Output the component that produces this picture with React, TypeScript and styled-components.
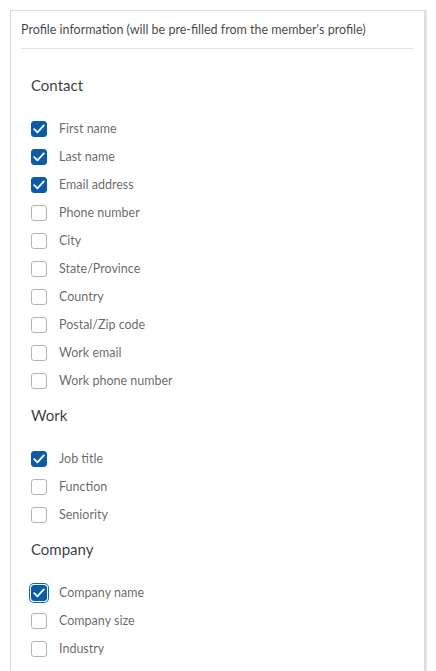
import React, { useState } from 'react';
import styled, { createGlobalStyle } from 'styled-components';

const GlobalStyle = createGlobalStyle`
  html, body {
    margin: 0;
    padding: 0;
    background: #ffffff;
    font-family: Lato, "Noto Sans", sans-serif;
  }
`;

const Panel = styled.div`
  box-sizing: border-box;
  margin: 10px 0 0 10px;
  width: 415px;
  border: 1px solid #dcdcdc;
  box-shadow: 2px 0 0 #e4e4e4;
  padding: 0 11px 20px 10px;
  background: #fff;
`;

const Header = styled.div`
  height: 37px;
  display: flex;
  align-items: center;
  border-bottom: 1px solid #e2e2e2;
  font-size: 12.5px;
  color: rgba(0, 0, 0, 0.75);
`;

const Sections = styled.div`
  padding: 26px 0 0 10px;
  display: flex;
  flex-direction: column;
  gap: 10.5px;
`;

const SectionTitle = styled.div`
  font-size: 15px;
  line-height: 20px;
  color: rgba(0, 0, 0, 0.78);
  margin-bottom: 19.5px;
`;

const Row = styled.label`
  display: flex;
  align-items: center;
  height: 28px;
  cursor: pointer;
`;

const Box = styled.span<{ $checked: boolean; $focused?: boolean }>`
  box-sizing: border-box;
  width: 16px;
  height: 16px;
  border-radius: 3px;
  flex: none;
  display: flex;
  align-items: center;
  justify-content: center;
  background: ${p => (p.$checked ? '#0a5ca8' : '#fff')};
  border: 1px solid ${p => (p.$checked ? '#0a5ca8' : '#b4b4b4')};
  box-shadow: ${p => (p.$focused ? '0 0 0 1px #fff, 0 0 0 2px #0a66c2' : 'none')};
`;

const RowText = styled.span`
  margin-left: 12px;
  font-size: 12.5px;
  color: rgba(0, 0, 0, 0.62);
`;

type Field = { label: string; checked: boolean; focused?: boolean };

const groups: { title: string; fields: Field[] }[] = [
  {
    title: 'Contact',
    fields: [
      { label: 'First name', checked: true },
      { label: 'Last name', checked: true },
      { label: 'Email address', checked: true },
      { label: 'Phone number', checked: false },
      { label: 'City', checked: false },
      { label: 'State/Province', checked: false },
      { label: 'Country', checked: false },
      { label: 'Postal/Zip code', checked: false },
      { label: 'Work email', checked: false },
      { label: 'Work phone number', checked: false },
    ],
  },
  {
    title: 'Work',
    fields: [
      { label: 'Job title', checked: true },
      { label: 'Function', checked: false },
      { label: 'Seniority', checked: false },
    ],
  },
  {
    title: 'Company',
    fields: [
      { label: 'Company name', checked: true, focused: true },
      { label: 'Company size', checked: false },
      { label: 'Industry', checked: false },
    ],
  },
];

const Check = () => (
  <svg width="12" height="10" viewBox="0 0 12 10" fill="none">
    <path d="M1.2 5.2 L4.4 8.3 L10.8 1.4" stroke="#fff" strokeWidth="1.8" strokeLinecap="round" strokeLinejoin="round" />
  </svg>
);

export default function App() {
  const [state, setState] = useState(groups);

  const toggle = (gi: number, fi: number) => {
    setState(prev =>
      prev.map((g, i) =>
        i !== gi
          ? g
          : { ...g, fields: g.fields.map((f, j) => (j === fi ? { ...f, checked: !f.checked } : f)) }
      )
    );
  };

  return (
    <>
      <GlobalStyle />
      <Panel>
        <Header>Profile information (will be pre-filled from the member's profile)</Header>
        <Sections>
          {state.map((g, gi) => (
            <div key={g.title}>
              <SectionTitle>{g.title}</SectionTitle>
              {g.fields.map((f, fi) => (
                <Row key={f.label} onClick={() => toggle(gi, fi)}>
                  <Box $checked={f.checked} $focused={f.focused}>
                    {f.checked && <Check />}
                  </Box>
                  <RowText>{f.label}</RowText>
                </Row>
              ))}
            </div>
          ))}
        </Sections>
      </Panel>
    </>
  );
}
